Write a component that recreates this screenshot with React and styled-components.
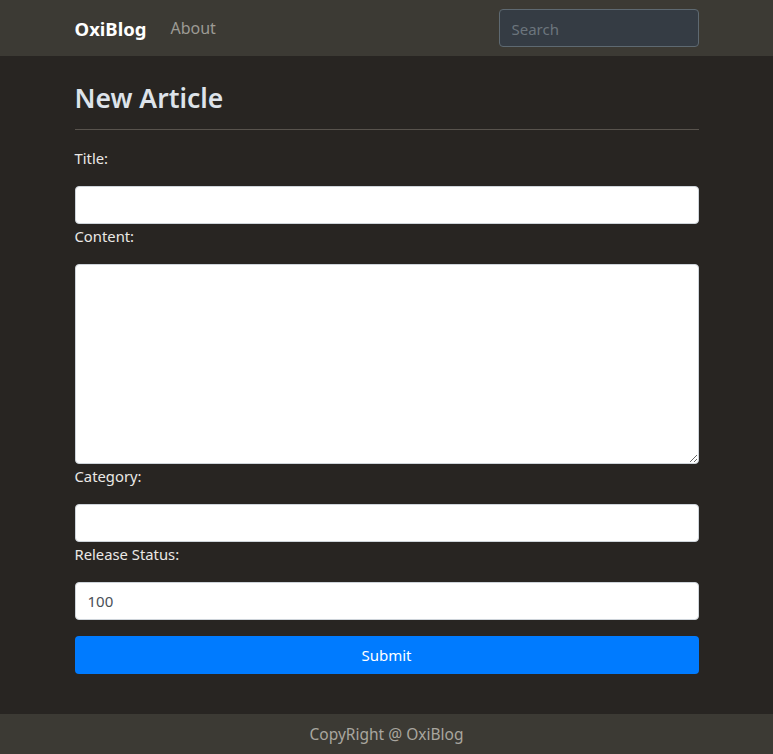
import React from 'react';
import styled, { createGlobalStyle } from 'styled-components';

const GlobalStyle = createGlobalStyle`
    html, body {
        margin: 0;
        padding: 0;
        background: #282522;
        font-family: "Noto Sans", "Open Sans", sans-serif;
    }
    * { box-sizing: border-box; }
`;

const Page = styled.div`
    display: flex;
    flex-direction: column;
    min-height: 754px;
`;

const NavBar = styled.nav`
    height: 56px;
    background: #3c3a34;
    display: flex;
    justify-content: center;
`;

const NavInner = styled.div`
    width: 624px;
    display: flex;
    align-items: center;
`;

const Brand = styled.a`
    color: #ffffff;
    font-size: 18.5px;
    font-weight: 700;
    margin-right: 24px;
    text-decoration: none;
`;

const NavLink = styled.a`
    color: #9d9b94;
    font-size: 16px;
    text-decoration: none;
`;

const Search = styled.input`
    margin-left: auto;
    width: 200px;
    height: 38px;
    background: #353c44;
    border: 1px solid #5e6971;
    border-radius: 4px;
    padding: 2px 12px 0;
    font-family: inherit;
    font-size: 15px;
    color: #ddd;
    &::placeholder { color: #6c757d; }
`;

const Main = styled.main`
    flex: 1;
    display: flex;
    justify-content: center;
    padding-bottom: 40px;
`;

const Container = styled.div`
    width: 624px;
`;

const Heading = styled.h1`
    margin: 24px 0 0;
    font-size: 26.5px;
    font-weight: 600;
    line-height: 36px;
    color: #dde3ea;
`;

const Rule = styled.hr`
    margin: 13px 0 16px;
    border: 0;
    border-top: 1px solid #58534d;
`;

const Form = styled.form`
    display: flex;
    flex-direction: column;
`;

const Label = styled.label`
    display: block;
    color: #ebe9e6;
    font-size: 14.8px;
    line-height: 24px;
    margin: 0 0 16px;
`;

const Field = styled.input`
    width: 100%;
    height: 38px;
    background: #fff;
    border: 1px solid #ced4da;
    border-radius: 4px;
    padding: 0 12px;
    font-family: inherit;
    font-size: 15px;
    color: #495057;
`;

const Area = styled.textarea`
    width: 100%;
    height: 200px;
    background: #fff;
    border: 1px solid #ced4da;
    border-radius: 4px;
    padding: 6px 12px;
    font-family: inherit;
    font-size: 15px;
    display: block;
`;

const Submit = styled.button`
    margin-top: 16px;
    height: 38px;
    width: 100%;
    background: #007bff;
    color: #fff;
    border: 0;
    border-radius: 4px;
    font-family: inherit;
    font-size: 15px;
`;

const Footer = styled.footer`
    height: 40px;
    background: #3c3a34;
    color: #a9a69f;
    font-size: 15.5px;
    display: flex;
    align-items: center;
    justify-content: center;
`;

export default function App() {
    return (
        <Page>
            <GlobalStyle />
            <NavBar>
                <NavInner>
                    <Brand href="#">OxiBlog</Brand>
                    <NavLink href="#">About</NavLink>
                    <Search placeholder="Search" />
                </NavInner>
            </NavBar>
            <Main>
                <Container>
                    <Heading>New Article</Heading>
                    <Rule />
                    <Form onSubmit={e => e.preventDefault()}>
                        <Label>Title:</Label>
                        <Field type="text" />
                        <Label>Content:</Label>
                        <Area />
                        <Label>Category:</Label>
                        <Field type="text" />
                        <Label>Release Status:</Label>
                        <Field type="number" defaultValue="100" />
                        <Submit type="submit">Submit</Submit>
                    </Form>
                </Container>
            </Main>
            <Footer>CopyRight @ OxiBlog</Footer>
        </Page>
    );
}
